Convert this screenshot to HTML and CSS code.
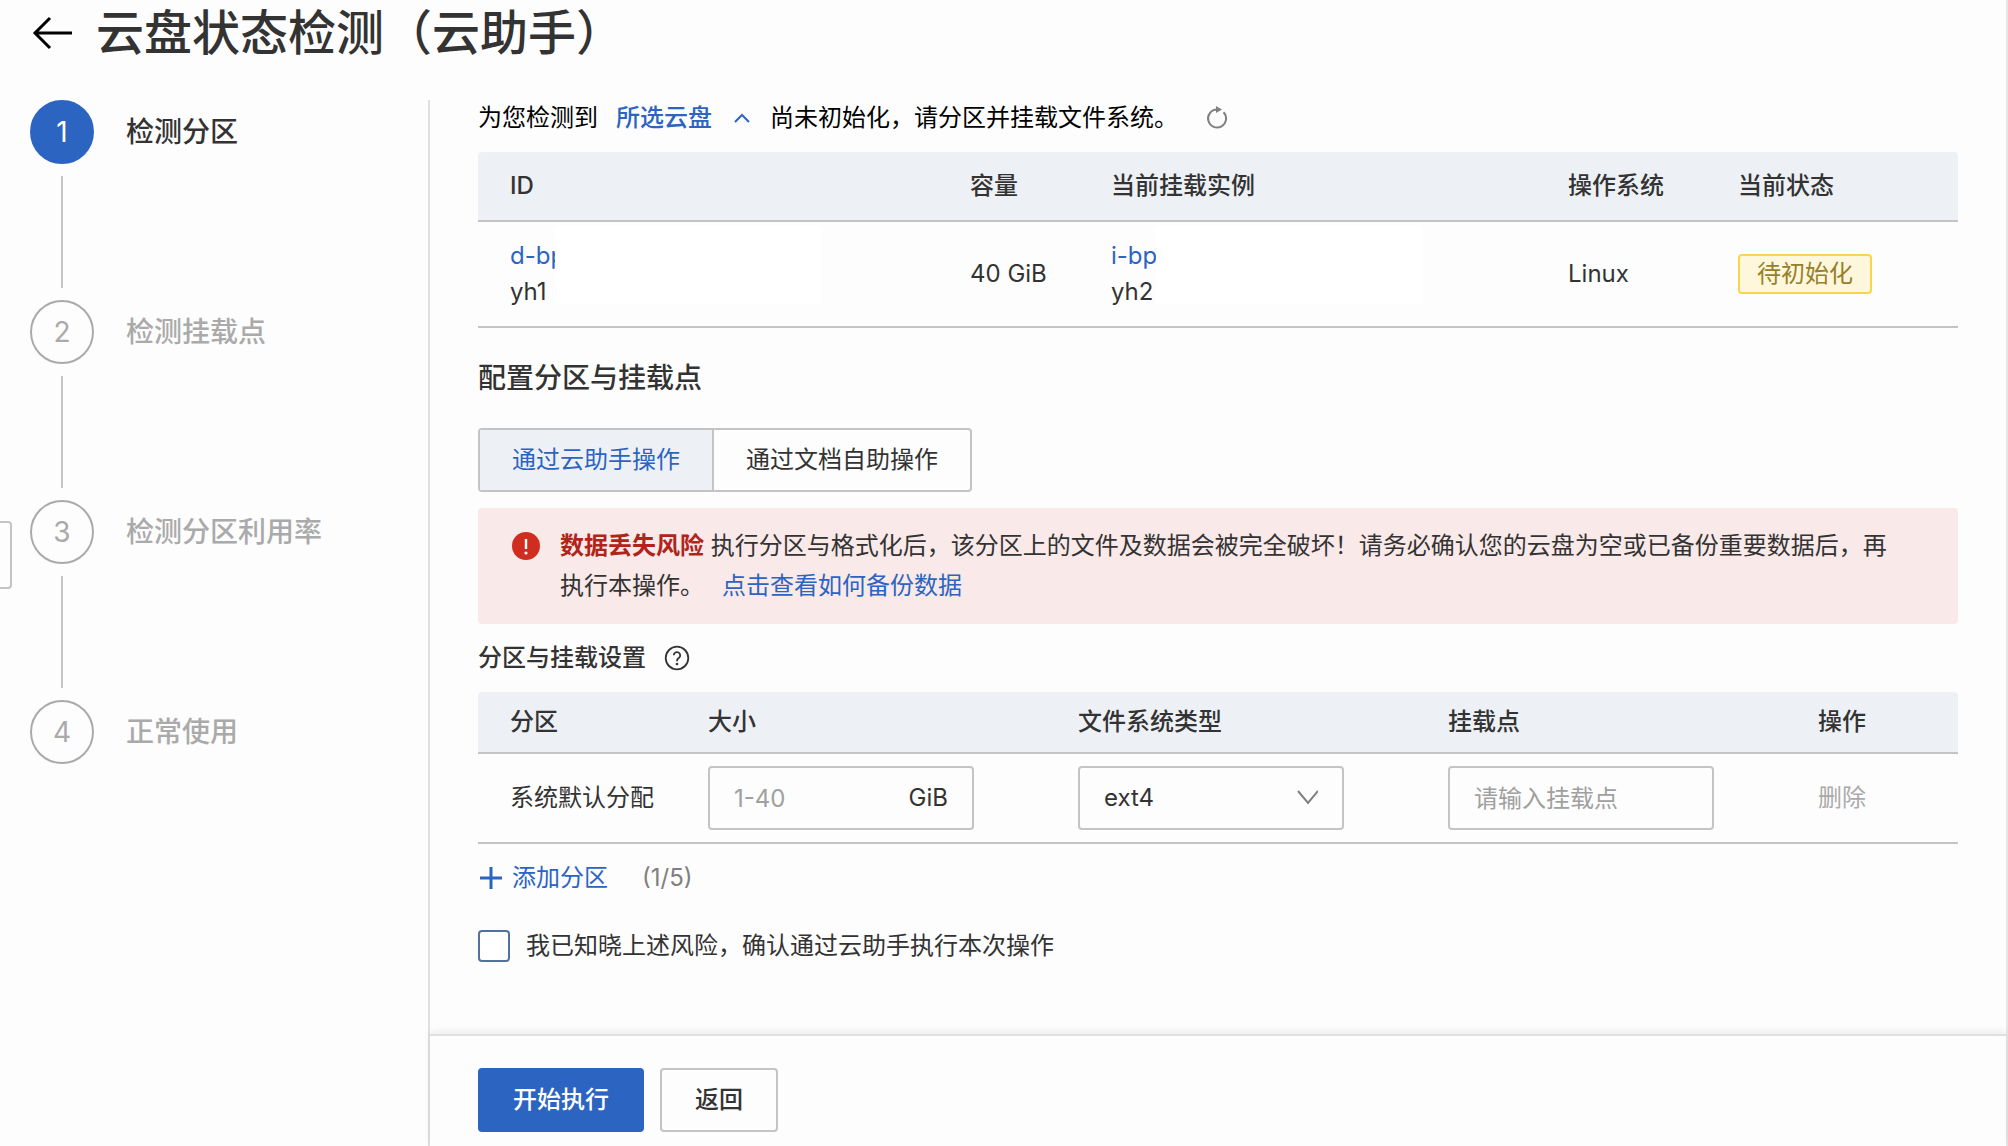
FILE: index.html
```html
<!DOCTYPE html>
<html lang="zh-CN">
<head>
<meta charset="utf-8">
<meta name="viewport" content="width=device-width, initial-scale=1">
<title>云盘状态检测（云助手）</title>
<link rel="stylesheet" href="styles.css">
</head>
<body>
<div class="page">
  <header class="page-header">
    <a class="back" href="#" aria-label="返回上一页">
      <svg width="42" height="34" viewBox="0 0 42 34" fill="none" stroke="#000" stroke-width="3"><path d="M40 17H2M18 2L3 17l15 15"/></svg>
    </a>
    <h1 class="title">云盘状态检测（云助手）</h1>
  </header>

  <button class="drawer-handle" type="button" aria-label="展开侧栏"></button>

  <div class="layout">
    <ol class="steps">
      <li class="step step-active"><span class="step-num">1</span><span class="step-label">检测分区</span></li>
      <li class="step"><span class="step-num">2</span><span class="step-label">检测挂载点</span></li>
      <li class="step"><span class="step-num">3</span><span class="step-label">检测分区利用率</span></li>
      <li class="step"><span class="step-num">4</span><span class="step-label">正常使用</span></li>
    </ol>

    <div class="panel">
      <main class="content">
        <div class="summary">
          <span>为您检测到</span>
          <button class="disk-toggle" type="button">所选云盘
            <svg width="16" height="10" viewBox="0 0 16 10" fill="none" stroke="currentColor" stroke-width="2"><path d="M1 9l7-7 7 7"/></svg>
          </button>
          <span>尚未初始化，请分区并挂载文件系统。</span>
          <button class="refresh" type="button" aria-label="刷新">
            <svg width="22" height="24" viewBox="0 0 22 24" fill="none" stroke="#808080" stroke-width="2"><path d="M17.500 6.200A9 9 0 1 1 11 3.500"/><path d="M10 0l6 3.500-6 3.500z" fill="#808080" stroke="none"/></svg>
          </button>
        </div>

        <table class="table disks">
          <colgroup><col class="c-id"><col class="c-size"><col><col class="c-os"><col class="c-state"></colgroup>
          <thead><tr><th>ID</th><th>容量</th><th>当前挂载实例</th><th>操作系统</th><th>当前状态</th></tr></thead>
          <tbody><tr>
            <td><div class="ident"><div class="ident-text"><a href="#">d-bp</a><span>yh1</span></div><div class="ident-mask"></div></div></td>
            <td>40 GiB</td>
            <td><div class="ident"><div class="ident-text"><a href="#">i-bp</a><span>yh2</span></div><div class="ident-mask"></div></div></td>
            <td>Linux</td>
            <td><span class="tag">待初始化</span></td>
          </tr></tbody>
        </table>

        <h2 class="section-title">配置分区与挂载点</h2>

        <div class="segmented">
          <button class="segment segment-on" type="button">通过云助手操作</button>
          <button class="segment" type="button">通过文档自助操作</button>
        </div>

        <div class="alert" role="alert">
          <svg class="alert-icon" width="28" height="28" viewBox="0 0 28 28"><circle cx="14" cy="14" r="14" fill="#d02d20"/><path d="M14 7v10" stroke="#fff" stroke-width="2.400"/><circle cx="14" cy="21" r="1.600" fill="#fff"/></svg>
          <p class="alert-text"><strong>数据丢失风险</strong> 执行分区与格式化后，该分区上的文件及数据会被完全破坏！请务必确认您的云盘为空或已备份重要数据后，再执行本操作。<a class="alert-link" href="#">点击查看如何备份数据</a></p>
        </div>

        <h3 class="sub-title">分区与挂载设置
          <svg width="26" height="26" viewBox="0 0 26 26" fill="none" stroke="#333" stroke-width="1.800"><circle cx="13" cy="13" r="11.300"/><path d="M9.800 10.300a3.200 3.200 0 1 1 5 2.700c-1.300.9-1.800 1.400-1.800 2.700v.5"/><circle cx="13" cy="19" r="1.300" fill="#333" stroke="none"/></svg>
        </h3>

        <table class="table parts">
          <colgroup><col class="c-part"><col><col><col><col class="c-action"></colgroup>
          <thead><tr><th>分区</th><th>大小</th><th>文件系统类型</th><th>挂载点</th><th>操作</th></tr></thead>
          <tbody><tr>
            <td>系统默认分配</td>
            <td class="field-cell"><label class="field"><input type="text" placeholder="1-40" aria-label="大小"><span>GiB</span></label></td>
            <td class="field-cell"><div class="field"><select aria-label="文件系统类型"><option>ext4</option></select>
              <svg width="22" height="16" viewBox="0 0 22 16" fill="none" stroke="#808080" stroke-width="2"><path d="M2 1l10 12L22 1"/></svg></div></td>
            <td class="field-cell"><div class="field"><input type="text" placeholder="请输入挂载点" aria-label="挂载点"></div></td>
            <td><button class="delete" type="button" disabled>删除</button></td>
          </tr></tbody>
        </table>

        <div class="add-row">
          <button class="add" type="button">
            <svg width="24" height="24" viewBox="0 0 24 24" stroke="currentColor" stroke-width="3"><path d="M2 12h22M13 1v22"/></svg>
            添加分区</button>
          <span class="count">(1/5)</span>
        </div>

        <label class="confirm"><input type="checkbox">我已知晓上述风险，确认通过云助手执行本次操作</label>
      </main>

      <footer class="actions">
        <button class="btn btn-primary" type="button">开始执行</button>
        <button class="btn" type="button">返回</button>
      </footer>
    </div>
  </div>
</div>
</body>
</html>
```
FILE: styles.css
```css
* { box-sizing: border-box; }

body {
  margin: 0;
  background: #fdfdfd;
  color: #333;
  font: 24px/36px Inter, "Noto Sans CJK SC", sans-serif;
}

button, input, select { font: inherit; color: inherit; }
button { margin: 0; padding: 0; border: 0; background: none; cursor: pointer; }
svg { display: block; flex: none; }
a { color: #2c64c2; text-decoration: none; }

.page {
  display: flex;
  flex-direction: column;
  min-height: 100vh;
  border-right: 2px solid #e6e6e6;
}

.page-header {
  display: flex;
  align-items: center;
  gap: 22px;
  height: 100px;
  padding: 0 32px 34px;
}

.title { margin: 0; font-size: 48px; line-height: 64px; font-weight: 500; }

.drawer-handle {
  position: absolute;
  top: 521px;
  left: 0;
  width: 12px;
  height: 68px;
  border: 2px solid #c4c4c4;
  border-left: 0;
  border-radius: 0 4px 4px 0;
}

.layout { display: flex; flex: 1; }

/* Steps */
.steps {
  flex: none;
  width: 428px;
  margin: 0;
  padding: 0 0 0 30px;
  list-style: none;
}

.step {
  display: grid;
  grid-template-columns: 64px 1fr;
  grid-template-rows: 64px 112px;
  column-gap: 32px;
  row-gap: 12px;
  align-items: center;
  height: 200px;
  color: #aaa;
  font-size: 28px;
}

.step:not(:last-child)::after {
  content: "";
  justify-self: center;
  width: 2px;
  height: 112px;
  background: #c4c4c4;
}

.step-num {
  display: flex;
  align-items: center;
  justify-content: center;
  height: 64px;
  border: 2px solid #aaa;
  border-radius: 50%;
}

.step-label { font-weight: 500; }
.step-active { color: #333; }
.step-active .step-num { border-color: #2c64c2; background: #2c64c2; color: #fff; }

/* Panel */
.panel {
  display: flex;
  flex: 1;
  flex-direction: column;
  min-width: 0;
  border-left: 2px solid #e0e0e0;
}

.content { flex: 1; padding: 0 48px; }

.summary {
  display: flex;
  align-items: center;
  gap: 18px;
  height: 52px;
  padding-bottom: 16px;
  color: #000;
}

.disk-toggle { display: flex; align-items: center; gap: 22px; padding-right: 2px; color: #2c64c2; font-weight: 500; }
.refresh { padding-left: 10px; }

.table { width: 100%; border-collapse: separate; border-spacing: 0; table-layout: fixed; }
.table th, .table td { padding: 0 0 0 32px; border-bottom: 2px solid #c4c4c4; text-align: left; white-space: nowrap; }
.table th { background: #edf1f6; font-weight: 500; }
.table th:first-child { border-top-left-radius: 4px; }
.table th:last-child { border-top-right-radius: 4px; }

.disks th { height: 70px; }
.disks td { height: 106px; }
.c-id { width: 460px; }
.c-size { width: 141px; }
.c-os { width: 170px; }
.c-state { width: 252px; }

.ident { display: flex; height: 104px; }
.ident-text { width: 45px; padding-top: 16px; overflow: hidden; }
.ident-text a, .ident-text span { display: block; }
.ident-mask { width: 266px; height: 78px; margin-top: 4px; background: #fff; }

.tag {
  display: inline-block;
  padding: 0 17px;
  border: 2px solid #f8d648;
  border-radius: 4px;
  background: #fff7db;
  color: #96802a;
}

.section-title { margin: 32px 0; font-size: 28px; line-height: 36px; font-weight: 500; }

.segmented { display: flex; width: max-content; height: 64px; border: 2px solid #c4c4c4; border-radius: 4px; }
.segment { padding: 0 32px; }
.segment + .segment { border-left: 2px solid #c4c4c4; }
.segment-on { background: #edf1f6; color: #2c64c2; }

.alert {
  display: flex;
  gap: 20px;
  margin-top: 16px;
  padding: 18px 48px 18px 34px;
  border-radius: 4px;
  background: #f9e9e9;
}

.alert-icon { margin-top: 6px; }
.alert-text { margin: 0; line-height: 40px; }
.alert-text strong { color: #b0241a; font-weight: 600; }
.alert-link { margin-left: 18px; }

.sub-title { display: flex; align-items: center; gap: 18px; margin: 16px 0; font-size: 24px; line-height: 36px; font-weight: 500; }

.parts th { height: 62px; }
.parts td { height: 90px; }
.c-part { width: 198px; }
.c-action { width: 172px; }

.table .field-cell { padding-right: 72px; }

.field {
  display: flex;
  align-items: center;
  height: 64px;
  padding: 0 24px;
  border: 2px solid #c4c4c4;
  border-radius: 4px;
}

.field input, .field select {
  flex: 1;
  width: 0;
  height: 60px;
  padding: 0;
  border: 0;
  outline: 0;
  background: none;
  appearance: none;
}

.field input::placeholder { color: #a0a0a0; opacity: 1; }
.delete { color: #aaa; }

.add-row { display: flex; align-items: center; gap: 34px; margin-top: 16px; }
.add { display: flex; align-items: center; gap: 10px; color: #2c64c2; }
.count { color: #808080; }

.confirm { display: flex; align-items: center; gap: 16px; width: max-content; margin: 32px 0; }

.confirm input {
  width: 32px;
  height: 32px;
  margin: 0;
  border: 2px solid #53719f;
  border-radius: 4px;
  background: #fff;
  appearance: none;
}
.confirm input:checked { background: #2c64c2; }

.actions {
  display: flex;
  gap: 16px;
  padding: 32px 48px 14px;
  border-top: 2px solid #e0e0e0;
  box-shadow: 0 -2px 8px rgba(0, 0, 0, 0.08);
}

.btn { height: 64px; padding: 0 33px; border: 2px solid #c4c4c4; border-radius: 4px; font-weight: 500; }
.btn-primary { border-color: #2c64c2; background: #2c64c2; color: #fff; }
```
